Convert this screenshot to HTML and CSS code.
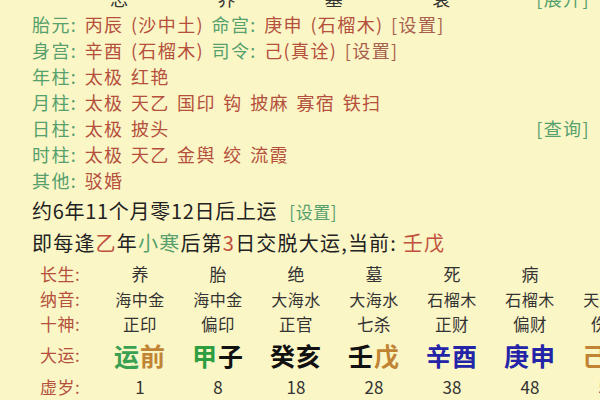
FILE: index.html
```html
<!DOCTYPE html>
<html lang="zh">
<head>
<meta charset="utf-8">
<link rel="stylesheet" href="styles.css">
</head>
<body>
<div class="page">
  <div class="row cut">
    <div class="cut-chars"><span>忘</span><span>界</span><span>墓</span><span>衰</span></div>
    <span class="g">[展开]</span>
  </div>
  <div class="row"><span><span class="g">胎元:</span> <span class="r">丙辰 (沙中土)</span> <span class="g">命宫:</span> <span class="r">庚申 (石榴木)</span> <span class="set">[设置]</span></span></div>
  <div class="row"><span><span class="g">身宫:</span> <span class="r">辛酉 (石榴木)</span> <span class="g">司令:</span> <span class="r">己(真诠)</span> <span class="set">[设置]</span></span></div>
  <div class="row"><span><span class="g">年柱:</span> <span class="r">太极 红艳</span></span></div>
  <div class="row"><span><span class="g">月柱:</span> <span class="r">太极 天乙 国印 钩 披麻 寡宿 铁扫</span></span></div>
  <div class="row"><span><span class="g">日柱:</span> <span class="r">太极 披头</span></span><span class="g">[查询]</span></div>
  <div class="row"><span><span class="g">时柱:</span> <span class="r">太极 天乙 金舆 绞 流霞</span></span></div>
  <div class="row"><span><span class="g">其他:</span> <span class="r">驳婚</span></span></div>
  <div class="line">约6年11个月零12日后上运<span class="g set2">[设置]</span></div>
  <div class="line wide">即每逢<span class="r2">乙</span>年<span class="g">小寒</span>后第<span class="r2">3</span>日交脱大运,当前: <span class="r2">壬戊</span></div>

  <div class="table">
    <div class="lbl h1">长生:</div>
    <div class="c h1">养</div><div class="c h1">胎</div><div class="c h1">绝</div><div class="c h1">墓</div><div class="c h1">死</div><div class="c h1">病</div><div class="c h1">衰</div>

    <div class="lbl h2">纳音:</div>
    <div class="c h2 sm">海中金</div><div class="c h2 sm">海中金</div><div class="c h2 sm">大海水</div><div class="c h2 sm">大海水</div><div class="c h2 sm">石榴木</div><div class="c h2 sm">石榴木</div><div class="c h2 sm">天上火</div>

    <div class="lbl h3">十神:</div>
    <div class="c h3 md">正印</div><div class="c h3 md">偏印</div><div class="c h3 md">正官</div><div class="c h3 md">七杀</div><div class="c h3 md">正财</div><div class="c h3 md">偏财</div><div class="c h3 md">伤官</div>

    <div class="lbl h4">大运:</div>
    <div class="c h4 big"><span class="dg">运</span><span class="do">前</span></div>
    <div class="c h4 big"><span class="dg2">甲</span>子</div>
    <div class="c h4 big">癸亥</div>
    <div class="c h4 big">壬<span class="do">戊</span></div>
    <div class="c h4 big"><span class="db">辛酉</span></div>
    <div class="c h4 big"><span class="db">庚申</span></div>
    <div class="c h4 big"><span class="do">己未</span></div>

    <div class="lbl h5">虚岁:</div>
    <div class="c h5 num">1</div><div class="c h5 num">8</div><div class="c h5 num">18</div><div class="c h5 num">28</div><div class="c h5 num">38</div><div class="c h5 num">48</div><div class="c h5 num">58</div>
  </div>
</div>
</body>
</html>
```
FILE: styles.css
```css
html, body {
  margin: 0;
  padding: 0;
}
body {
  width: 600px;
  height: 400px;
  overflow: hidden;
  background: #fbf6c6;
  font-family: "Noto Sans CJK SC", "Noto Sans", sans-serif;
  color: #222;
}
.page {
  padding-left: 32px;
}
.row {
  display: flex;
  justify-content: space-between;
  height: 26px;
  line-height: 26px;
  font-size: 18px;
  letter-spacing: 1.4px;
  word-spacing: 2px;
  padding-right: 10px;
  white-space: nowrap;
}
.row.cut {
  margin-top: -15px;
}
.cut-chars {
  display: flex;
  gap: 88px;
  margin-left: 78px;
  color: #333;
}
.g { color: #55a06c; }
.r { color: #b4503c; }
.set { color: #a8604e; }
.line {
  height: 32px;
  line-height: 32px;
  font-size: 20px;
  letter-spacing: 0.7px;
  color: #222;
  white-space: nowrap;
}
.line.wide {
  letter-spacing: 1.2px;
}
.row + .line { margin-top: 2px; }
.set2 {
  font-size: 17px;
  letter-spacing: 0.6px;
  margin-left: 12px;
}
.r2 { color: #c0503c; }
.table {
  display: grid;
  grid-template-columns: 61px repeat(7, 78px);
  margin-left: 8px;
  margin-top: 2px;
  width: 700px;
  white-space: nowrap;
}
.lbl {
  color: #b4503c;
  font-size: 17px;
  letter-spacing: 0.5px;
}
.c {
  text-align: center;
  color: #333;
  font-size: 17px;
}
.h1 { height: 26px; line-height: 26px; }
.h2 { height: 24px; line-height: 24px; }
.h3 { height: 26px; line-height: 26px; }
.h4 { height: 36px; line-height: 36px; }
.h5 { height: 28px; line-height: 28px; }
.sm { font-size: 16px; letter-spacing: 0.5px; }
.md { font-size: 16.5px; letter-spacing: 0.5px; }
.big {
  font-size: 25px;
  letter-spacing: 1px;
  font-weight: 700;
  color: #111;
}
.num { font-size: 17px; }
.dg { color: #3aa052; }
.dg2 { color: #2e9e40; }
.do { color: #c08434; }
.db { color: #2424a8; }
```
